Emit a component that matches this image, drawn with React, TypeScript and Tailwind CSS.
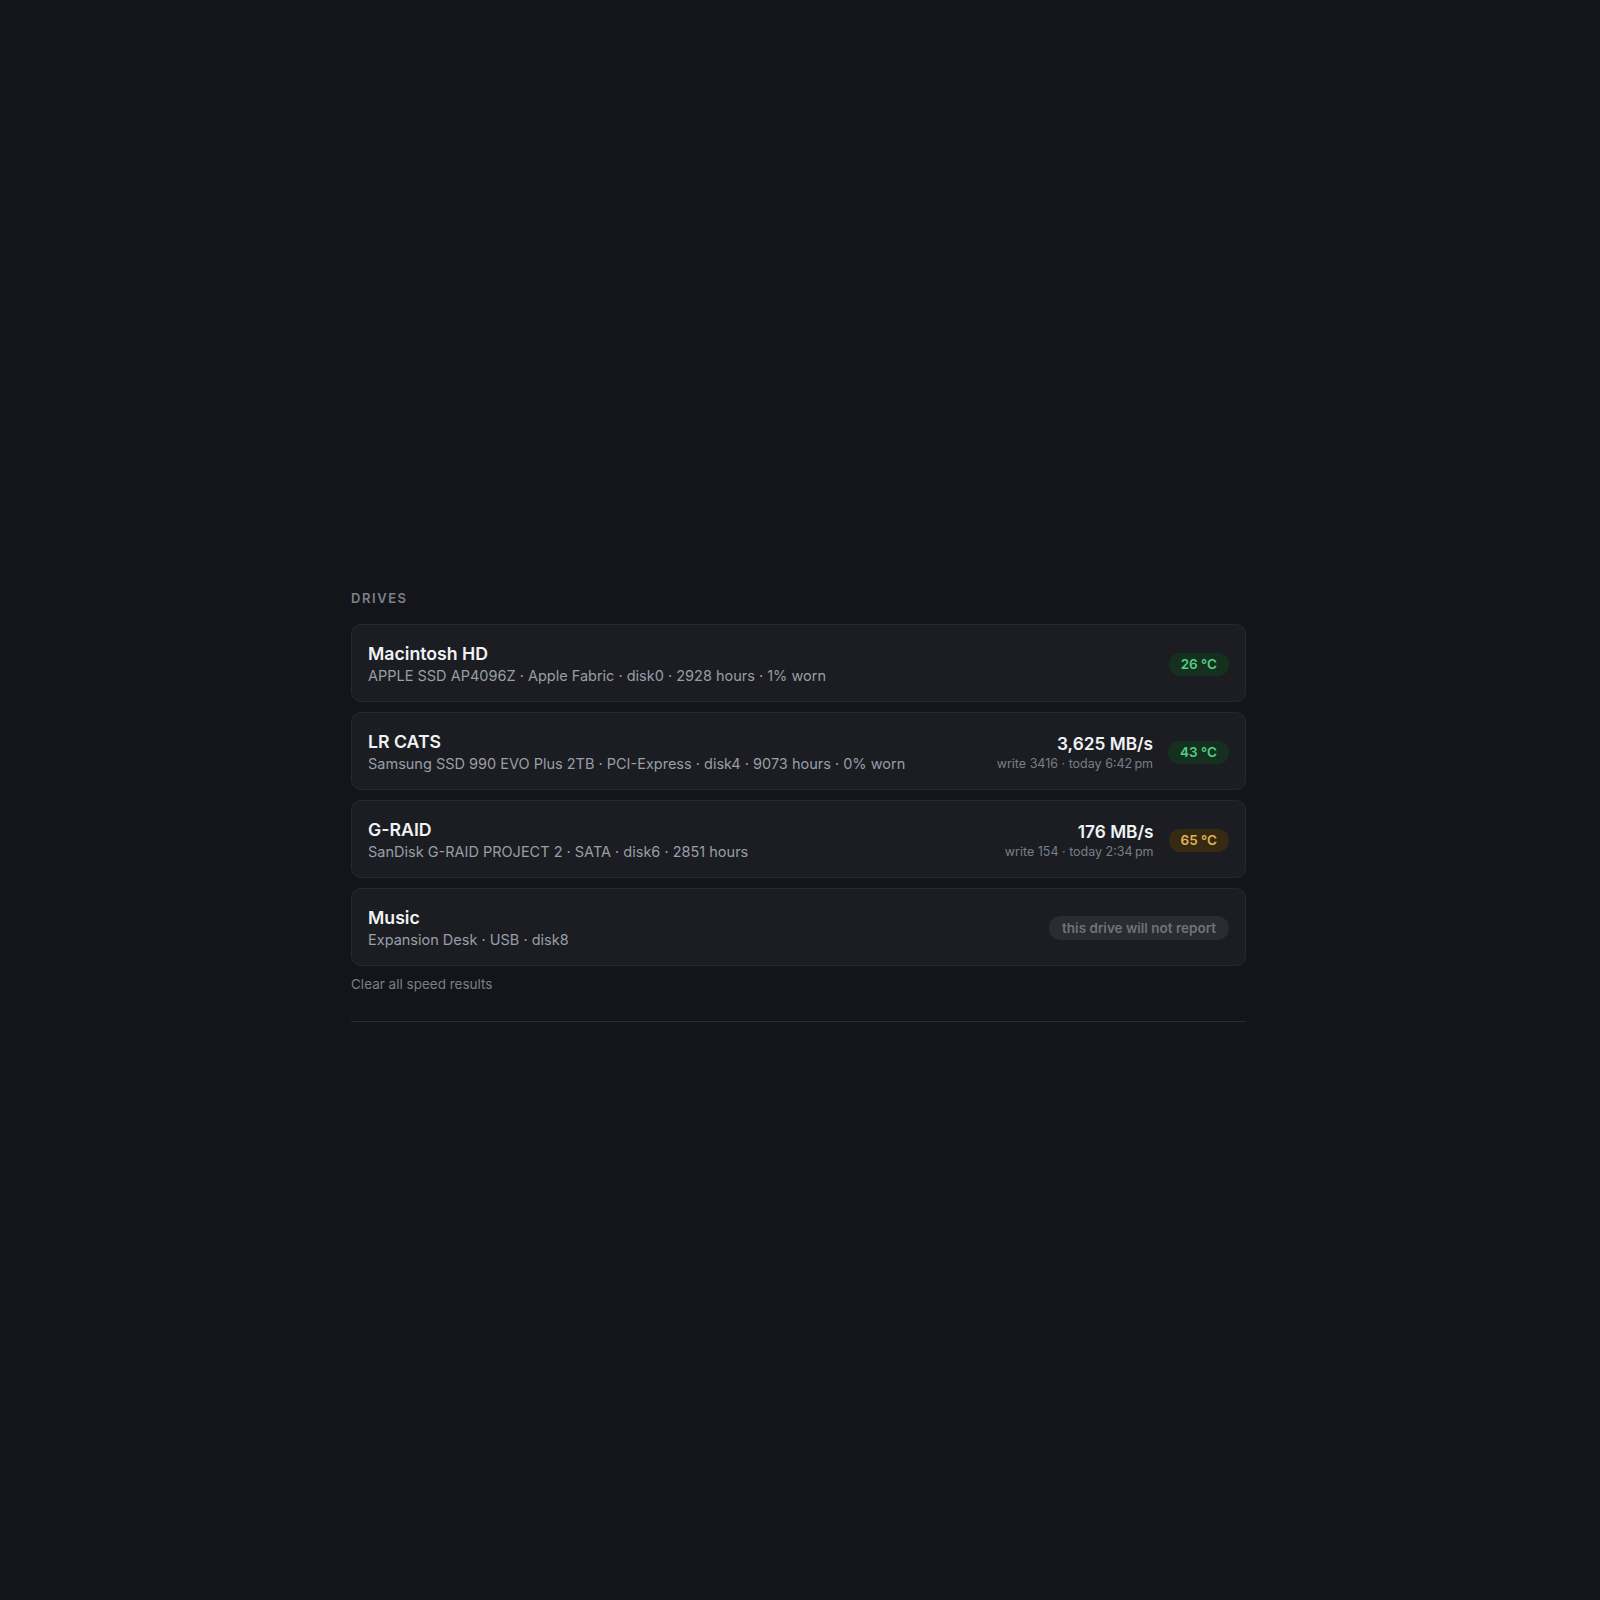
type Temp = { value: number; tone: 'ok' | 'warm' };

type Drive = {
  name: string;
  details: string[];
  speed?: { rate: string; note: string };
  temp?: Temp;
};

const drives: Drive[] = [
  {
    name: 'Macintosh HD',
    details: ['APPLE SSD AP4096Z', 'Apple Fabric', 'disk0', '2928 hours', '1% worn'],
    temp: { value: 26, tone: 'ok' },
  },
  {
    name: 'LR CATS',
    details: ['Samsung SSD 990 EVO Plus 2TB', 'PCI-Express', 'disk4', '9073 hours', '0% worn'],
    speed: { rate: '3,625 MB/s', note: 'write 3416 · today 6:42\u2009pm' },
    temp: { value: 43, tone: 'ok' },
  },
  {
    name: 'G-RAID',
    details: ['SanDisk G-RAID PROJECT 2', 'SATA', 'disk6', '2851 hours'],
    speed: { rate: '176 MB/s', note: 'write 154 · today 2:34\u2009pm' },
    temp: { value: 65, tone: 'warm' },
  },
  {
    name: 'Music',
    details: ['Expansion Desk', 'USB', 'disk8'],
  },
];

function TempBadge({ temp }: { temp: Temp }) {
  const tone =
    temp.tone === 'ok' ? 'bg-[#16301f] text-[#4fcf86]' : 'bg-[#372a12] text-[#e3b25a]';
  return (
    <span
      className={`inline-flex h-[23px] items-center rounded-full px-3 text-[13.5px] font-semibold ${tone}`}
    >
      {temp.value} °C
    </span>
  );
}

function DriveRow({ drive }: { drive: Drive }) {
  return (
    <div className="flex items-center justify-between rounded-[10px] border border-[#262930] bg-[#1b1d23] px-4 pt-[17px] pb-[15px]">
      <div className="min-w-0">
        <div className="text-[17.7px] leading-6 font-semibold text-[#f1f2f4]">{drive.name}</div>
        <div className="text-[14.5px] leading-5 text-[#9a9ea6]">{drive.details.join(' · ')}</div>
      </div>

      <div className="flex items-center gap-[15px]">
        {drive.speed && (
          <div className="text-right">
            <div className="text-[17.3px] leading-6 font-semibold text-[#f1f2f4]">
              {drive.speed.rate}
            </div>
            <div className="text-[12.5px] leading-4 text-[#7a7e87]">{drive.speed.note}</div>
          </div>
        )}
        {drive.temp ? (
          <TempBadge temp={drive.temp} />
        ) : (
          <span className="inline-flex h-[24px] items-center rounded-full bg-[#2a2c33] px-[13px] text-[13.5px] font-semibold text-[#6f737c]">
            this drive will not report
          </span>
        )}
      </div>
    </div>
  );
}

export default function App() {
  return (
    <div
      className="min-h-screen bg-[#14151a] pt-[590px]"
      style={{ fontFamily: 'Inter, "Noto Sans", sans-serif' }}
    >
      <section className="ml-[351px] w-[895px] border-b border-[#2a2c32] pb-[26px]">
        <h2 className="mb-[18px] text-[13px] leading-4 font-semibold tracking-[0.12em] text-[#7d8089]">
          DRIVES
        </h2>

        <div className="flex flex-col gap-[10px]">
          {drives.map((d) => (
            <DriveRow key={d.name} drive={d} />
          ))}
        </div>

        <button className="mt-2 text-[13.5px] leading-5 text-[#7a7e87]">
          Clear all speed results
        </button>
      </section>
    </div>
  );
}
